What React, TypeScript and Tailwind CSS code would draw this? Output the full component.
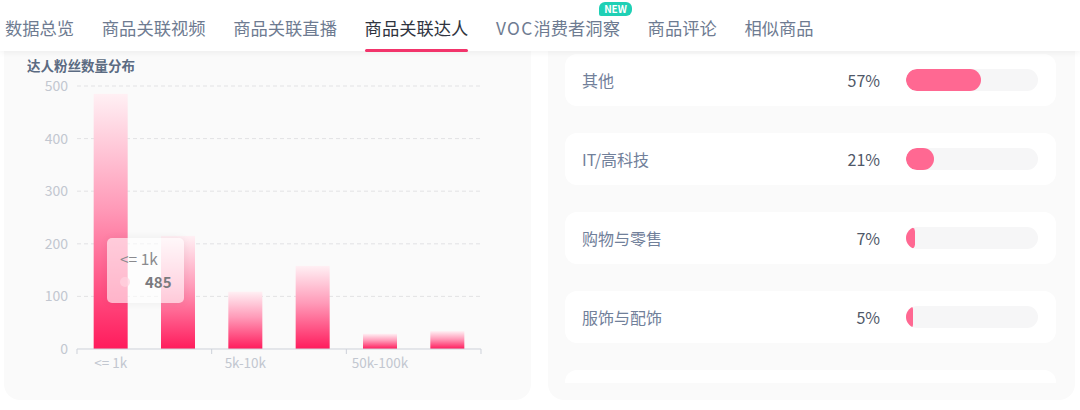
const tabs = ["数据总览", "商品关联视频", "商品关联直播", "商品关联达人", "VOC消费者洞察", "商品评论", "相似商品"]

const bars = [
  { label: "<= 1k", value: 485 },
  { label: "", value: 215 },
  { label: "5k-10k", value: 109 },
  { label: "", value: 158 },
  { label: "50k-100k", value: 29 },
  { label: "", value: 34 },
]

const industries = [
  { name: "其他", pct: 57 },
  { name: "IT/高科技", pct: 21 },
  { name: "购物与零售", pct: 7 },
  { name: "服饰与配饰", pct: 5 },
  { name: "", pct: 0 },
]

// chart geometry, in page coordinates (viewBox is shifted to match)
const X0 = 77
const X1 = 481
const catW = (X1 - X0) / bars.length
const yOf = (v: number) => 349 - v * 0.526

function FansChart() {
  return (
    <svg width={527} height={326} viewBox="4 74 527 326" className="block">
      <defs>
        <linearGradient id="barFill" x1="0" y1="0" x2="0" y2="1">
          <stop offset="0%" stopColor="#fff0f4" />
          <stop offset="45%" stopColor="#ff9ab8" />
          <stop offset="100%" stopColor="#ff1b5c" />
        </linearGradient>
      </defs>

      {[500, 400, 300, 200, 100, 0].map((v) => (
        <g key={v}>
          <text x={68} y={yOf(v) + 5} textAnchor="end" fontSize={14} fill="#c2c7d0">
            {v}
          </text>
          {v > 0 && (
            <line x1={X0} x2={X1} y1={yOf(v)} y2={yOf(v)} stroke="#e2e2e4" strokeDasharray="4 3" />
          )}
        </g>
      ))}

      {bars.map((b, i) => {
        const cx = X0 + catW * (i + 0.5)
        return (
          <g key={i}>
            <rect x={cx - 17} y={yOf(b.value)} width={34} height={yOf(0) - yOf(b.value)} fill="url(#barFill)" />
            {b.label && (
              <text x={cx} y={368} textAnchor="middle" fontSize={13.5} fill="#c2c7d0">
                {b.label}
              </text>
            )}
          </g>
        )
      })}

      <line x1={X0} x2={X1} y1={349} y2={349} stroke="#cdd1d9" />
      {[0, 2, 4, 6].map((i) => (
        <line key={i} x1={X0 + catW * i} x2={X0 + catW * i} y1={349} y2={354} stroke="#cdd1d9" />
      ))}
    </svg>
  )
}

export default function App() {
  return (
    <div
      className="w-[1080px] h-[410px] bg-white overflow-hidden"
      style={{ fontFamily: '"Noto Sans CJK SC", "Noto Sans", sans-serif' }}
    >
      {/* Tabs */}
      <div className="relative z-10 h-[51px] bg-white shadow-[0_2px_6px_rgba(0,0,0,0.05)] flex gap-[27.7px] pl-[5px]">
        {tabs.map((t, i) => {
          const active = i === 3
          const voc = t.startsWith("VOC")
          return (
            <div key={t} className="relative h-full flex items-center pt-[4px]">
              <span className={`text-[17.3px] leading-[17px] ${active ? "text-[#2f3440]" : "text-[#6e7b91]"}`}>
                {voc ? (
                  <>
                    <span className="tracking-[1.3px]">VOC</span>
                    {t.slice(3)}
                  </>
                ) : (
                  t
                )}
              </span>
              {active && <div className="absolute left-0 right-0 bottom-[-1px] h-[3px] rounded-full bg-[#f2346b]" />}
              {voc && (
                <span className="absolute top-[2px] right-[-12px] h-[14px] px-[5px] flex items-center bg-[#1fd0b5] text-white text-[10px] font-bold leading-none rounded-tl-[6px] rounded-tr-[6px] rounded-br-[6px] rounded-bl-[2px]">
                  NEW
                </span>
              )}
            </div>
          )
        })}
      </div>

      <div className="grid grid-cols-2 gap-[17px] pl-[4px] pr-[5px]">
        {/* Left: fans distribution */}
        <div className="relative h-[349px] bg-[#fafafa] rounded-b-[16px] overflow-hidden">
          <div className="pt-[5px] pl-[23px] text-[13.5px] leading-[18px] font-bold text-[#5b6b82]">达人粉丝数量分布</div>
          <FansChart />

          {/* tooltip */}
          <div className="absolute left-[103px] top-[187px] w-[77px] h-[65px] rounded-[5px] bg-white/60 shadow-[0_0_8px_rgba(0,0,0,0.06)] pl-[13px] pt-[9px]">
            <div className="text-[15.5px] leading-[22px] text-[#8a8a8e]">&lt;= 1k</div>
            <div className="flex items-center mt-[3px]">
              <span className="w-[10px] h-[10px] rounded-full bg-[#ffd3df]/70" />
              <span className="ml-[15px] text-[15px] leading-[20px] font-bold text-[#7a7a7e]">485</span>
            </div>
          </div>
        </div>

        {/* Right: industries */}
        <div className="h-[349px] bg-[#fafafa] rounded-b-[16px] pl-[17px] pr-[19px]">
          <div className="h-[332px] overflow-hidden pt-[3px] flex flex-col gap-[27px]">
            {industries.map((row, i) => (
              <div key={i} className="h-[52px] shrink-0 rounded-[12px] bg-white flex items-center pl-[17px] pr-[18px]">
                <span className="flex-1 text-[16px] text-[#71809a]">{row.name}</span>
                <span className="text-[16px] text-[#4f5868]">{row.name && `${row.pct}%`}</span>
                <div className="ml-[26px] w-[132px] h-[22px] rounded-full bg-[#f6f6f7] overflow-hidden">
                  {row.pct > 0 && (
                    <div className="h-full rounded-full bg-[#ff6892]" style={{ width: `${row.pct}%` }} />
                  )}
                </div>
              </div>
            ))}
          </div>
        </div>
      </div>
    </div>
  )
}
